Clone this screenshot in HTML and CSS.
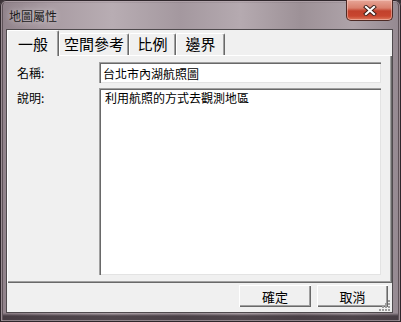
FILE: index.html
```html
<!DOCTYPE html>
<html lang="zh-Hant">
<head>
  <meta charset="UTF-8" />
  <title>地圖屬性</title>
  <link rel="stylesheet" href="styles.css">
</head>
<body>

  <div class="window">
    <div class="titlebar">
      <span class="title">地圖屬性</span>
      <button class="close-button" title="關閉">
        <svg width="14" height="11" viewBox="0 0 14 11">
          <path d="M3 2 L11 9 M11 2 L3 9" stroke="#3a1d18" stroke-width="4" stroke-linecap="square" />
          <path d="M3 2 L11 9 M11 2 L3 9" stroke="#ffffff" stroke-width="2.2" stroke-linecap="square" />
        </svg>
      </button>
    </div>

    <div class="client">
      <div class="tabs">
        <div class="tab active">一般</div>
        <div class="tab tab-wide">空間參考</div>
        <div class="tab">比例</div>
        <div class="tab tab-last">邊界</div>
      </div>

      <div class="panel">
        <label class="field-label" for="map-name">名稱:</label>
        <input class="text-box" id="map-name" type="text" value="台北市內湖航照圖">

        <label class="field-label" for="map-desc">說明:</label>
        <textarea class="text-area" id="map-desc">利用航照的方式去觀測地區</textarea>
      </div>

      <div class="button-row">
        <button class="dialog-button ok-button">確定</button>
        <button class="dialog-button">取消</button>
      </div>

      <svg class="grip" width="12" height="12" viewBox="0 0 12 12">
        <rect x="9" y="1" width="2" height="2" fill="#9c9c9c" />
        <rect x="6" y="4" width="2" height="2" fill="#9c9c9c" />
        <rect x="9" y="4" width="2" height="2" fill="#9c9c9c" />
        <rect x="3" y="7" width="2" height="2" fill="#9c9c9c" />
        <rect x="6" y="7" width="2" height="2" fill="#9c9c9c" />
        <rect x="9" y="7" width="2" height="2" fill="#9c9c9c" />
        <rect x="0" y="10" width="2" height="2" fill="#9c9c9c" />
        <rect x="3" y="10" width="2" height="2" fill="#9c9c9c" />
        <rect x="6" y="10" width="2" height="2" fill="#9c9c9c" />
        <rect x="9" y="10" width="2" height="2" fill="#9c9c9c" />
      </svg>
    </div>
  </div>

</body>
</html>
```

FILE: styles.css
```css
:root {
  --face: #f0f0f0;
  --light: #ffffff;
  --shadow: #a0a0a0;
  --dark-shadow: #696969;
  --text: #000000;
}

body {
  margin: 0;
  width: 401px;
  height: 322px;
  overflow: hidden;
  background: #3a3136;
  font-family: "Noto Sans CJK TC", "Noto Sans", sans-serif;
  color: var(--text);
}

.window {
  width: 401px;
  height: 322px;
  box-sizing: border-box;
  display: flex;
  flex-direction: column;
  background:
    linear-gradient(180deg, rgba(40, 30, 36, 0.55) 0, rgba(40, 30, 36, 0) 3px),
    linear-gradient(0deg, rgba(45, 36, 42, 0.75) 0, rgba(45, 36, 42, 0.75) 6px, rgba(45, 36, 42, 0) 9px),
    linear-gradient(90deg, #8f8189 0%, #a89ba2 12%, #b8adb3 28%, #a4989f 45%, #b5aab0 60%, #9d9197 75%, #aea3a9 88%, #948890 100%);
  box-shadow: inset 0 0 0 1px #2f272c, inset 0 0 0 2px rgba(230, 215, 222, 0.45), inset 3px 0 #5e5258, inset -3px 0 #5e5258;
  border-radius: 6px 6px 0 0;
}

.titlebar {
  height: 29px;
  display: flex;
  align-items: flex-start;
  flex-shrink: 0;
}

.title {
  padding: 9px 0 0 9px;
  font-size: 12px;
  line-height: 14px;
  color: #1a1a1a;
  text-shadow: 0 0 6px rgba(255, 255, 255, 0.7);
}

.close-button {
  margin-left: auto;
  margin-right: 8px;
  width: 47px;
  height: 21px;
  padding: 0;
  border: 1px solid #4e2a24;
  border-top: none;
  border-radius: 0 0 5px 5px;
  background: linear-gradient(180deg, #e7a698 0%, #d9806d 40%, #c2412c 55%, #c8462f 80%, #de7a5e 100%);
  box-shadow: inset 0 0 0 1px rgba(255, 220, 210, 0.45);
  display: flex;
  align-items: center;
  justify-content: center;
}

.client {
  position: relative;
  flex: 1;
  margin: 0 8px 9px 6px;
  border: 1px solid #4f4a4d;
  background: var(--face);
  display: flex;
  flex-direction: column;
}

.tabs {
  height: 25px;
  display: flex;
  align-items: flex-end;
  flex-shrink: 0;
}

.tab {
  box-sizing: border-box;
  width: 47px;
  height: 22px;
  border-top: 1px solid var(--light);
  border-left: 1px solid var(--light);
  border-right: 1px solid var(--dark-shadow);
  box-shadow: inset -1px 0 var(--shadow);
  border-radius: 2px 2px 0 0;
  font-size: 15px;
  line-height: 20px;
  text-align: center;
  background: var(--face);
}

.tab.active {
  position: relative;
  width: 52px;
  height: 26px;
  margin-bottom: -1px;
  padding-top: 3px;
}

.tab-wide {
  width: 70px;
}

.tab-last {
  width: 49px;
}

.panel {
  flex: 1;
  box-sizing: border-box;
  border-top: 1px solid var(--light);
  border-left: 1px solid var(--light);
  box-shadow: inset -1px -1px var(--dark-shadow), inset -2px -2px var(--shadow);
  padding: 6px 0 0 9px;
  display: grid;
  grid-template-columns: 82px 282px;
  grid-template-rows: 21px 187px;
  row-gap: 5px;
  align-content: start;
}

.field-label {
  font-size: 12px;
  line-height: 21px;
}

.field-label[for="map-desc"] {
  line-height: 14px;
  padding-top: 3px;
}

.text-box,
.text-area {
  box-sizing: border-box;
  margin: 0;
  border: none;
  outline: none;
  background: var(--light);
  font-family: inherit;
  font-size: 12px;
  color: var(--text);
  box-shadow: inset 1px 1px var(--shadow), inset 2px 2px var(--dark-shadow), inset -1px -1px #e3e3e3;
}

.text-box {
  height: 21px;
  padding: 2px 0 0 4px;
}

.text-area {
  height: 187px;
  padding: 3px 0 0 6px;
  line-height: 14px;
  resize: none;
  overflow: hidden;
}

.button-row {
  height: 29px;
  flex-shrink: 0;
  box-sizing: border-box;
  display: flex;
  justify-content: flex-end;
  gap: 6px;
  padding: 2px 4px 0 0;
}

.dialog-button {
  width: 71px;
  height: 22px;
  padding: 0;
  border: none;
  background: var(--face);
  font-family: inherit;
  font-size: 13px;
  color: var(--text);
  box-shadow: inset 1px 1px var(--light), inset -1px -1px var(--dark-shadow), inset -2px -2px var(--shadow);
}

.ok-button {
  width: 72px;
}

.grip {
  position: absolute;
  right: 1px;
  bottom: 1px;
}
```
